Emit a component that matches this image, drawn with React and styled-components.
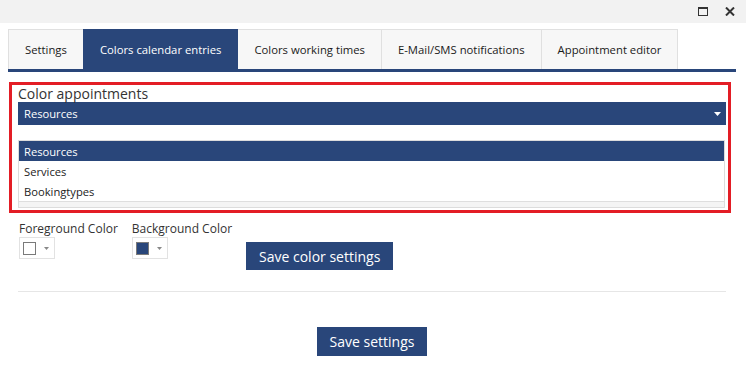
import React, { useState } from "react";
import styled, { createGlobalStyle } from "styled-components";

const navy = "#29467a";

const GlobalStyle = createGlobalStyle`
  body {
    margin: 0;
    background: #ffffff;
    font-family: "Open Sans", "Noto Sans", sans-serif;
    color: #333333;
  }
`;

const tabs = [
  "Settings",
  "Colors calendar entries",
  "Colors working times",
  "E-Mail/SMS notifications",
  "Appointment editor",
];

const options = ["Resources", "Services", "Bookingtypes"];

const Caret = ({ $color = "#fff", $w = 7, $h = 4 }) => (
  <svg width={$w} height={$h} viewBox="0 0 7 4">
    <polygon points="0,0 7,0 3.5,4" fill={$color} />
  </svg>
);

const App = () => {
  const [activeTab, setActiveTab] = useState(1);
  const [selected, setSelected] = useState("Resources");

  return (
    <Window>
      <GlobalStyle />
      <TitleBar>
        <WindowButton title="Maximize">
          <svg width="10" height="9" viewBox="0 0 10 9">
            <rect x="0.5" y="0.5" width="9" height="8" fill="none" stroke="#333" />
            <rect x="0" y="0" width="10" height="2" fill="#333" />
          </svg>
        </WindowButton>
        <WindowButton title="Close">
          <svg width="10" height="9" viewBox="0 0 10 9">
            <path d="M1 0.5 L9 8.5 M9 0.5 L1 8.5" stroke="#333" strokeWidth="2" />
          </svg>
        </WindowButton>
      </TitleBar>

      <Content>
        <TabBar>
          {tabs.map((label, index) => (
            <Tab
              key={label}
              $active={index === activeTab}
              onClick={() => setActiveTab(index)}
            >
              {label}
            </Tab>
          ))}
        </TabBar>

        <HighlightBox>
          <FieldLabel>Color appointments</FieldLabel>
          <Select>
            <span>{selected}</span>
            <Caret />
          </Select>
          <OptionList>
            {options.map((option) => (
              <OptionItem
                key={option}
                $selected={option === selected}
                onClick={() => setSelected(option)}
              >
                {option}
              </OptionItem>
            ))}
            <ScrollStrip />
          </OptionList>
        </HighlightBox>

        <ColorRow>
          <ColorField>
            <SmallLabel>Foreground Color</SmallLabel>
            <Picker>
              <Swatch $color="#ffffff" />
              <Caret $color="#888" $w={5} $h={3} />
            </Picker>
          </ColorField>
          <ColorField>
            <SmallLabel>Background Color</SmallLabel>
            <Picker>
              <Swatch $color={navy} />
              <Caret $color="#888" $w={5} $h={3} />
            </Picker>
          </ColorField>
          <Button $top="21px" $height="28px" $padding="0 13px">
            Save color settings
          </Button>
        </ColorRow>

        <Divider />

        <Footer>
          <Button $height="29px" $padding="0 12.5px">
            Save settings
          </Button>
        </Footer>
      </Content>
    </Window>
  );
};

const Window = styled.div`
  width: 746px;
  min-height: 366px;
`;

const TitleBar = styled.div`
  height: 23px;
  background: #f2f2f2;
  display: flex;
  align-items: center;
  justify-content: flex-end;
  gap: 17px;
  padding-right: 11px;
  box-sizing: border-box;
`;

const WindowButton = styled.div`
  display: flex;
  width: 10px;
  height: 9px;
  cursor: pointer;
`;

const Content = styled.div`
  padding: 6px 10px 0 8px;
`;

const TabBar = styled.div`
  display: flex;
  border-bottom: 3px solid ${navy};
`;

const Tab = styled.div`
  height: 40px;
  box-sizing: border-box;
  display: flex;
  align-items: center;
  padding: 0 16px;
  margin-left: -1px;
  font-size: 11.3px;
  white-space: nowrap;
  cursor: pointer;
  color: ${(p) => (p.$active ? "#ffffff" : "#1a1a1a")};
  background: ${(p) => (p.$active ? navy : "#f7f7f7")};
  border: 1px solid ${(p) => (p.$active ? navy : "#e0e0e0")};
  border-bottom: none;
  position: relative;
  z-index: ${(p) => (p.$active ? 1 : 0)};

  &:first-child {
    margin-left: 0;
  }
`;

const HighlightBox = styled.div`
  margin: 10px 5px 0 1px;
  border: 3px solid #e31d25;
  padding: 0 2px 2px 6px;
`;

const FieldLabel = styled.div`
  font-size: 14px;
  line-height: 17px;
  color: #333;
`;

const Select = styled.div`
  height: 23px;
  display: flex;
  align-items: center;
  justify-content: space-between;
  padding: 0 5px 0 6px;
  background: ${navy};
  color: #ffffff;
  font-size: 11.2px;
`;

const OptionList = styled.div`
  margin: 15px 1px 0 0;
  border: 1px solid #dcdcdc;
`;

const OptionItem = styled.div`
  height: 20px;
  display: flex;
  align-items: center;
  padding-left: 5px;
  font-size: 11.2px;
  cursor: pointer;
  color: ${(p) => (p.$selected ? "#ffffff" : "#222")};
  background: ${(p) => (p.$selected ? navy : "#ffffff")};
`;

const ScrollStrip = styled.div`
  height: 5px;
  border-top: 1px solid #dedede;
  background: #f4f4f4;
`;

const ColorRow = styled.div`
  display: flex;
  align-items: flex-start;
  gap: 14px;
  margin-top: 8px;
  padding-left: 11px;
`;

const ColorField = styled.div`
  display: flex;
  flex-direction: column;
  align-items: flex-start;
`;

const SmallLabel = styled.div`
  font-size: 12px;
  line-height: 16px;
  color: #333;
  white-space: nowrap;
`;

const Picker = styled.div`
  width: 36px;
  height: 22px;
  box-sizing: border-box;
  border: 1px solid #e2e2e2;
  display: flex;
  align-items: center;
  gap: 8px;
  padding-left: 3px;
`;

const Swatch = styled.div`
  width: 13px;
  height: 13px;
  box-sizing: border-box;
  border: 1px solid #7a7a7a;
  background: ${(p) => p.$color};
`;

const Button = styled.button`
  margin-top: ${(p) => p.$top || "0"};
  height: ${(p) => p.$height};
  padding: ${(p) => p.$padding};
  border: none;
  background: ${navy};
  color: #ffffff;
  font-family: "Open Sans", "Noto Sans", sans-serif;
  font-size: 14px;
  cursor: pointer;
`;

const Divider = styled.div`
  height: 1px;
  margin: 21px 10px 0 10px;
  background: #e6e6e6;
`;

const Footer = styled.div`
  display: flex;
  justify-content: center;
  margin-top: 35px;
`;

export default App;
